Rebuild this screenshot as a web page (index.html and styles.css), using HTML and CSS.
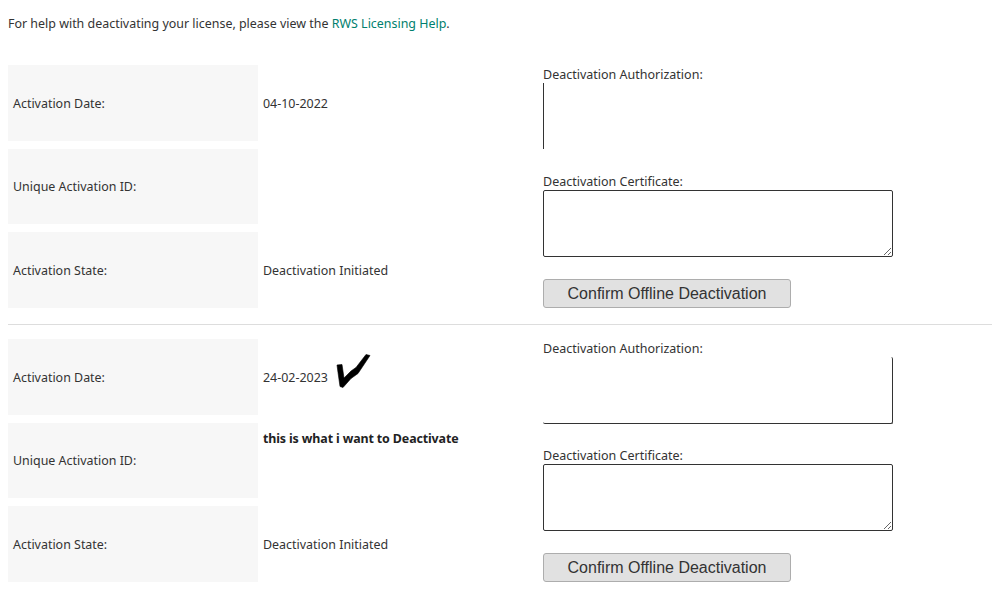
FILE: index.html
```html
<!DOCTYPE html>
<html lang="en">
<head>
<meta charset="utf-8">
<title>Deactivate license</title>
<link rel="stylesheet" href="styles.css">
</head>
<body>
<p class="help">For help with deactivating your license, please view the <a href="#">RWS Licensing Help</a>.</p>

<section class="record first">
  <div class="details">
    <div class="label">Activation Date:</div><div class="value">04-10-2022</div>
    <div class="label">Unique Activation ID:</div><div class="value"></div>
    <div class="label">Activation State:</div><div class="value">Deactivation Initiated</div>
  </div>
  <form class="offline">
    <label class="field-label">Deactivation Authorization:</label>
    <textarea class="box only-left"></textarea>
    <label class="field-label second">Deactivation Certificate:</label>
    <textarea class="box"></textarea>
    <button type="button" class="confirm">Confirm Offline Deactivation</button>
  </form>
</section>

<hr class="divider">

<section class="record">
  <div class="details">
    <div class="label">Activation Date:</div>
    <div class="value">24-02-2023
      <svg class="tick" width="36" height="38" viewBox="0 0 36 38" aria-hidden="true"><path d="M1 13 L6 12.5 L8 26 L15 19 L20 15.5 L30 2.5 L34 3.5 L22 21.5 L15 26.5 L7 35.5 L4 34.5 L2 20.5 Z" fill="#000" stroke="#000" stroke-width="0.6" stroke-linejoin="round"/></svg>
    </div>
    <div class="label">Unique Activation ID:</div><div class="value note">this is what i want to Deactivate</div>
    <div class="label">Activation State:</div><div class="value">Deactivation Initiated</div>
  </div>
  <form class="offline">
    <label class="field-label">Deactivation Authorization:</label>
    <textarea class="box only-right-bottom"></textarea>
    <label class="field-label second">Deactivation Certificate:</label>
    <textarea class="box"></textarea>
    <button type="button" class="confirm">Confirm Offline Deactivation</button>
  </form>
</section>
</body>
</html>
```
FILE: styles.css
```css
* { box-sizing: border-box; }
html, body { margin: 0; padding: 0; background: #fff; }
body {
  padding-left: 8px;
  height: 595px;
  overflow: hidden;
  font-family: "Noto Sans", "Open Sans", sans-serif;
  font-size: 12.45px;
  line-height: 17px;
  color: #333;
}
.help { margin: 0; padding-top: 15px; height: 65px; }
.help a { color: #00806e; text-decoration: none; }
.record { display: flex; }
.details {
  display: grid;
  grid-template-columns: 250px 285px;
  grid-template-rows: 76px 75px 76px;
  row-gap: 8px;
  width: 535px;
}
.label {
  background: #f7f7f7;
  padding-left: 5px;
  display: flex;
  align-items: center;
}
.value {
  padding-left: 5px;
  display: flex;
  align-items: center;
}
.tick { margin: -13px 0 0 8px; flex: none; }
.note {
  align-items: flex-start;
  padding-top: 7px;
  font-weight: 700;
  letter-spacing: -0.13px;
  color: #222;
}
.offline { display: flex; flex-direction: column; align-items: flex-start; }
.field-label { display: block; height: 18px; padding-top: 1px; font-size: 12.5px; line-height: 18px; }
.field-label.second { margin-top: 23px; height: 17px; padding-top: 0; }
.box {
  display: block;
  width: 350px;
  height: 67px;
  margin: 0;
  border: 1px solid #333;
  border-radius: 2px;
  background: #fff;
  padding: 2px;
}
.only-left { height: 66px; margin-bottom: 1px; border-width: 0 0 0 1px; border-radius: 0; resize: none; }
.only-right-bottom { border-width: 0 1px 1px 0; resize: none; }
.confirm {
  width: 248px;
  height: 29px;
  margin-top: 22px;
  padding: 0;
  background: #e1e1e1;
  border: 1px solid #adadad;
  border-radius: 3px;
  font-family: "Liberation Sans", Arial, sans-serif;
  font-size: 16px;
  color: #333;
}
.divider {
  margin: 16px 0 14px;
  height: 1px;
  border: 0;
  background: #ddd;
}
```
